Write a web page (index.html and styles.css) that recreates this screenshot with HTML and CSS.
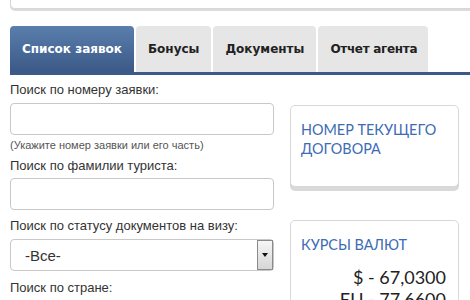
FILE: index.html
```html
<!DOCTYPE html>
<html lang="ru">

<head>
    <meta charset="UTF-8">
    <meta name="viewport" content="width=device-width, initial-scale=1.0">
    <title>Кабинет агента</title>
    <link rel="stylesheet" href="styles.css">
</head>

<body>
    <div class="page">
        <!-- Нижний край верхнего блока -->
        <div class="top-box"></div>

        <!-- Вкладки -->
        <div class="tabs">
            <a class="tab active" href="#">Список заявок</a>
            <a class="tab" href="#">Бонусы</a>
            <a class="tab" href="#">Документы</a>
            <a class="tab" href="#">Отчет агента</a>
        </div>

        <div class="content">
            <form class="search">
                <label class="field-label label-first">Поиск по номеру заявки:</label>
                <input type="text" class="field" />
                <div class="hint">(Укажите номер заявки или его часть)</div>

                <label class="field-label label-second">Поиск по фамилии туриста:</label>
                <input type="text" class="field" />

                <label class="field-label label-third">Поиск по статусу документов на визу:</label>
                <div class="select">
                    <span class="select-value">-Все-</span>
                    <span class="select-button"><span class="arrow"></span></span>
                </div>

                <label class="field-label label-fourth">Поиск по стране:</label>
                <input type="text" class="field" />
            </form>

            <div class="sidebar">
                <div class="info-box contract">
                    <div class="info-title">НОМЕР ТЕКУЩЕГО ДОГОВОРА</div>
                </div>

                <div class="info-box rates">
                    <div class="info-title">КУРСЫ ВАЛЮТ</div>
                    <div class="rate">$ - 67,0300</div>
                    <div class="rate">EU - 77,6600</div>
                </div>
            </div>
        </div>
    </div>
</body>

</html>
```

FILE: styles.css
```css
body {
    margin: 0;
    background-color: #ffffff;
    font-family: Arial, "Liberation Sans", sans-serif;
    color: #333;
    overflow: hidden;
}

.page {
    width: 620px;
    padding-left: 10px;
}

.top-box {
    height: 8px;
    border: 1px solid #d6d6d6;
    border-top: none;
    border-radius: 0 0 5px 5px;
    box-shadow: 0 2px 0 #dcdcdc;
    background-color: #fff;
}

.tabs {
    display: flex;
    align-items: flex-end;
    gap: 2px;
    margin-top: 17px;
    border-bottom: 3px solid #3d5a88; /* Linha azul embaixo das abas */
}

.tab {
    display: flex;
    align-items: center;
    height: 46px;
    padding: 0 12px;
    background-color: #e6e6e6;
    border-radius: 4px 4px 0 0;
    color: #222;
    font-family: Tahoma, "DejaVu Sans", sans-serif;
    font-weight: bold;
    font-size: 12px;
    text-decoration: none;
}

.tab:last-child {
    padding: 0 11px 0 12px;
    letter-spacing: -0.3px;
}

.tab.active {
    background: linear-gradient(to bottom, #5a7fad, #3b5987);
    color: #fff;
}

.content {
    display: flex;
    gap: 16px;
}

.search {
    width: 264px;
    display: flex;
    flex-direction: column;
}

.field-label {
    font-size: 13px;
    line-height: 16px;
    color: #333;
    margin-bottom: 5px;
}

.label-first {
    margin-top: 7px;
}

.label-second {
    margin-top: 6px;
    margin-bottom: 4px;
}

.label-third {
    margin-top: 8px;
}

.label-fourth {
    margin-top: 9px;
}

.field {
    box-sizing: border-box;
    height: 32px;
    width: 100%;
    margin: 0;
    border: 1px solid #c8c8c8;
    border-radius: 4px;
    background-color: #fff;
}

.hint {
    font-size: 11px;
    line-height: 14px;
    margin-top: 3px;
    color: #555;
}

.select {
    box-sizing: border-box;
    display: flex;
    align-items: center;
    height: 32px;
    border: 1px solid #c8c8c8;
    border-radius: 4px;
    background-color: #fff;
}

.select-value {
    flex: 1;
    padding-left: 14px;
    font-size: 15px;
    color: #333;
}

.select-button {
    display: flex;
    align-items: center;
    justify-content: center;
    box-sizing: border-box;
    width: 16px;
    height: 30px;
    border: 1px solid #8a8a8a;
    background: linear-gradient(to bottom, #f6f6f6, #d6d6d6);
}

.arrow {
    width: 0;
    height: 0;
    border-left: 3px solid transparent;
    border-right: 3px solid transparent;
    border-top: 4px solid #111;
}

.sidebar {
    width: 169px;
    display: flex;
    flex-direction: column;
}

.info-box {
    box-sizing: border-box;
    border: 1px solid #d8d8d8;
    border-radius: 5px;
    box-shadow: 0 4px 0 #d9d9d9;
    padding: 14px 10px 0 10px;
    background-color: #fff;
}

.contract {
    margin-top: 30px;
    height: 82px;
}

.rates {
    margin-top: 33px;
    height: 120px;
}

.info-title {
    font-family: Lato, sans-serif;
    font-size: 14.4px;
    line-height: 19px;
    color: #3d6cb4;
}

.rates .info-title {
    margin-bottom: 12px;
}

.rate {
    font-family: Lato, sans-serif;
    font-size: 18px;
    line-height: 22px;
    color: #222;
    text-align: right;
    padding-right: 2px;
}
```
